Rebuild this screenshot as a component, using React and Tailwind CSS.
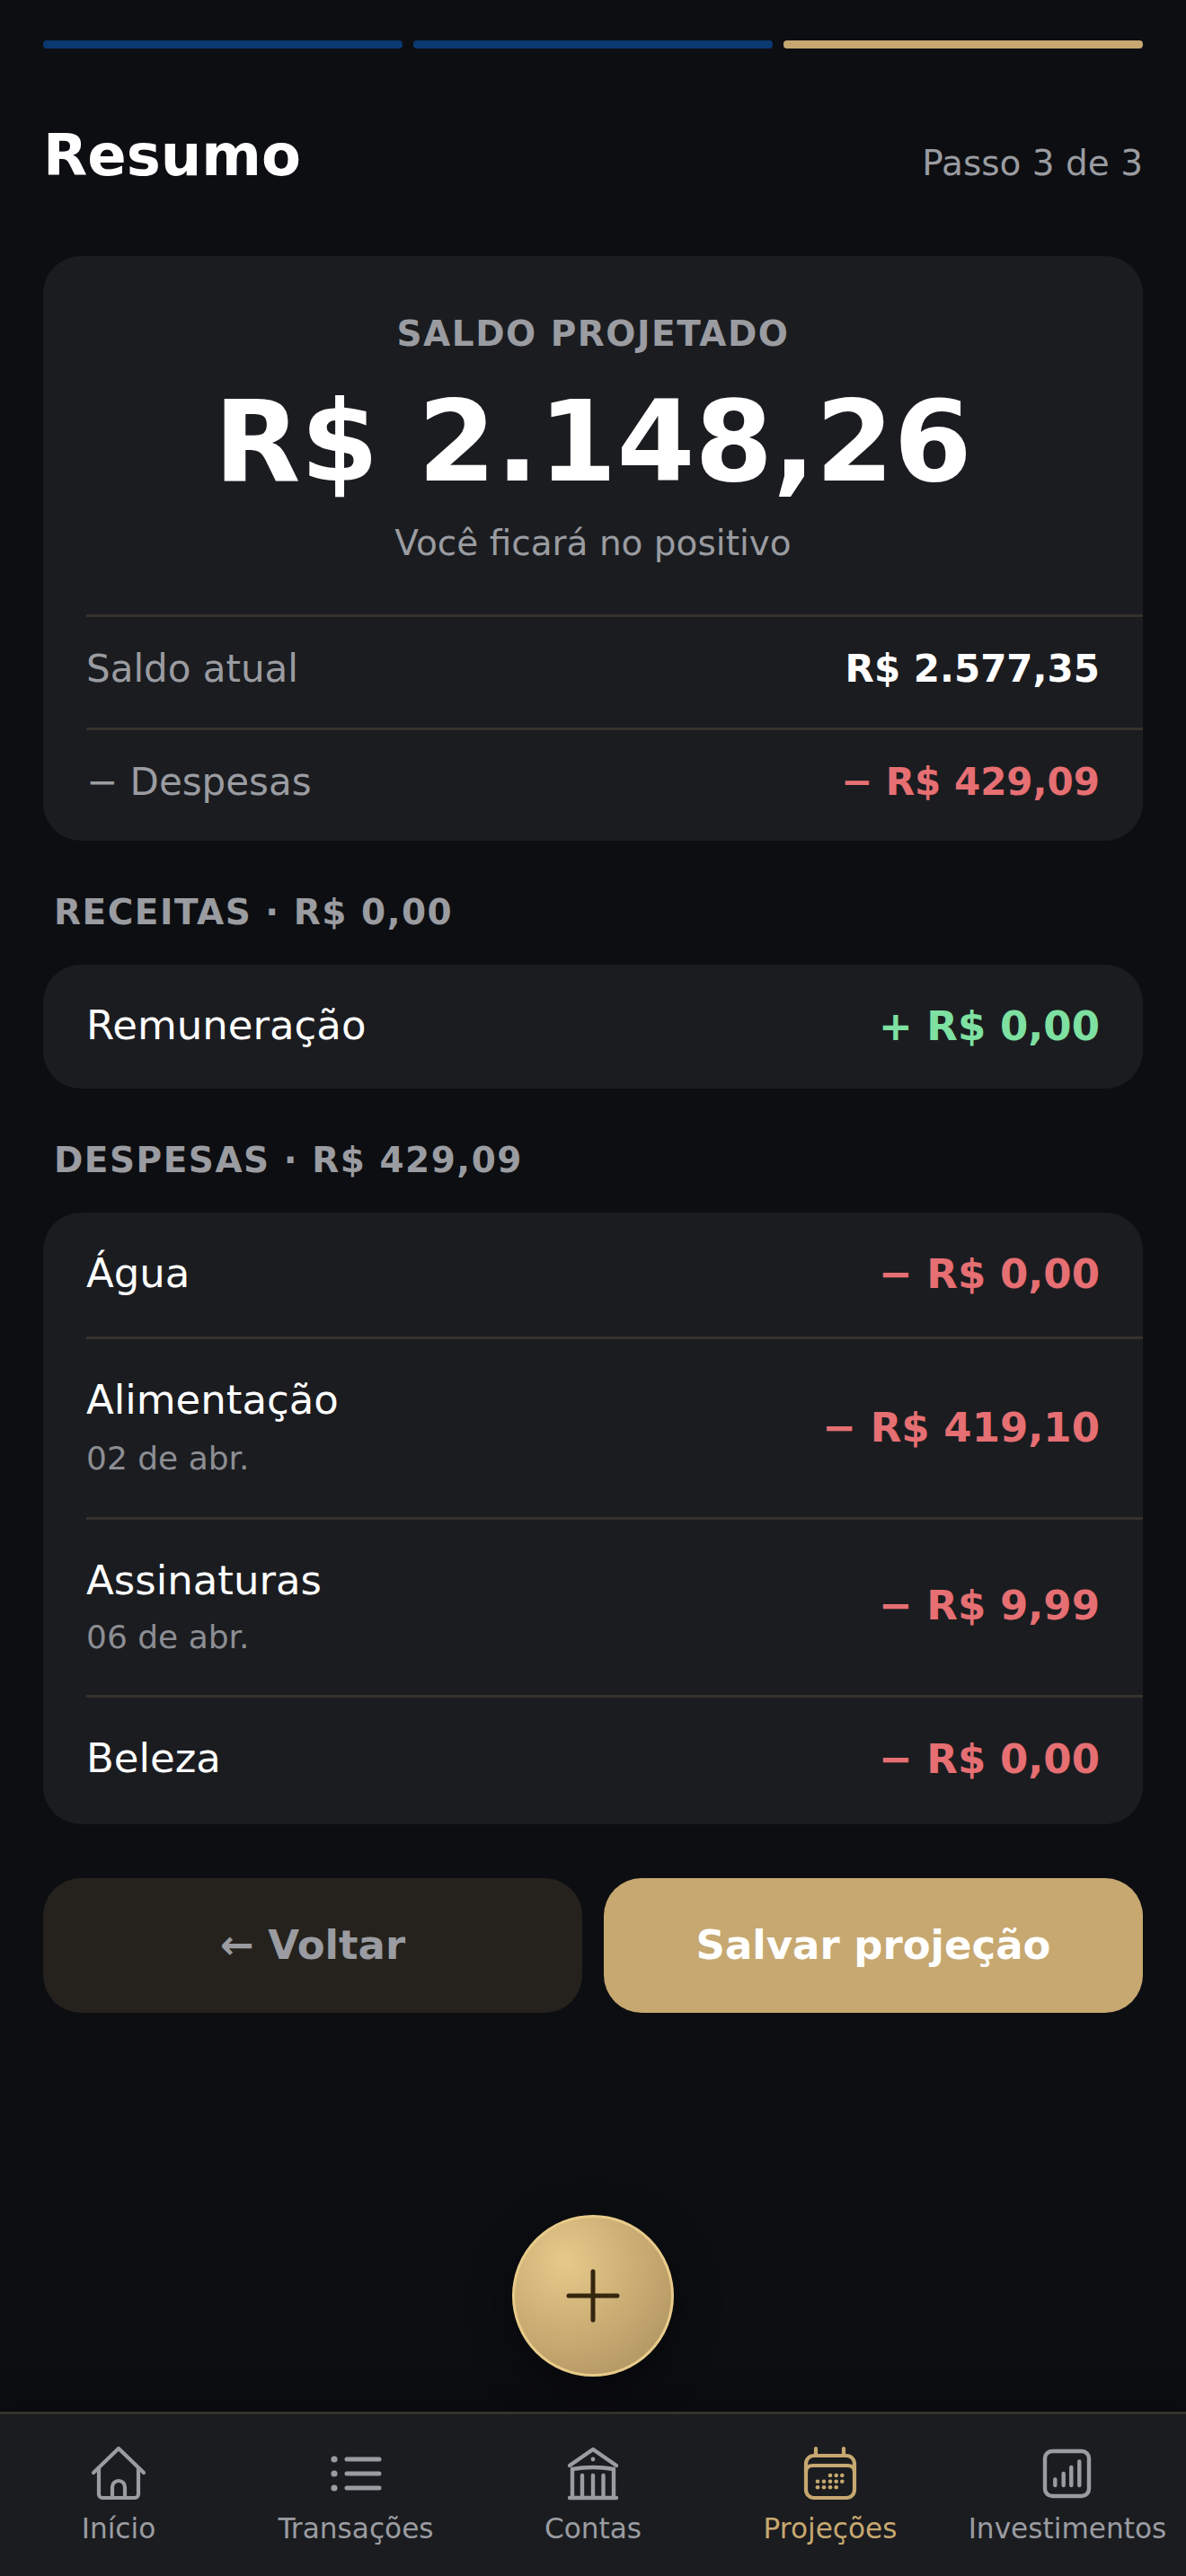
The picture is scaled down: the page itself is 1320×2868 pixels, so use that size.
const font = "font-['DejaVu_Sans',sans-serif]";

function Row({ label, sub, subClass = '', padBottom = 'pb-[43px]', value, valueClass = '', color, divider }) {
  return (
    <div className="flex items-stretch pl-12">
      <div className={`flex flex-1 items-center justify-between pr-12 ${divider ? 'border-t-[3px] border-[#34322b]' : ''}`}>
        <div className={`pt-[41px] ${padBottom}`}>
          <div className="text-[45px] leading-[54px] text-white">{label}</div>
          {sub && <div className={`text-[36px] leading-[48px] text-[#8c8e93] ${subClass}`}>{sub}</div>}
        </div>
        <div className={`text-[45px] font-bold ${color} ${valueClass}`}>{value}</div>
      </div>
    </div>
  );
}

function HomeIcon() {
  return (
    <svg width="72" height="72" viewBox="0 0 72 72" fill="none" stroke="currentColor" strokeWidth="4.2" strokeLinecap="round" strokeLinejoin="round">
      <path d="M8 35 36 8 64 35" />
      <path d="M14 30V59a4 4 0 0 0 4 4H54a4 4 0 0 0 4-4V30" />
      <path d="M29 63V51a6 6 0 0 1 14 0V63" />
    </svg>
  );
}

function ListIcon() {
  return (
    <svg width="72" height="72" viewBox="0 0 72 72" fill="none" stroke="currentColor" strokeWidth="5" strokeLinecap="round">
      <path d="M26 20H62M26 36H62M26 52H62" />
      <circle cx="12" cy="20" r="3.6" fill="currentColor" stroke="none" />
      <circle cx="12" cy="36" r="3.6" fill="currentColor" stroke="none" />
      <circle cx="12" cy="52" r="3.6" fill="currentColor" stroke="none" />
    </svg>
  );
}

function BankIcon() {
  return (
    <svg width="72" height="72" viewBox="0 0 72 72" fill="none" stroke="currentColor" strokeWidth="4.4" strokeLinecap="round" strokeLinejoin="round">
      <path d="M10 27 36 9 62 27" />
      <path d="M13 31Q36 27 59 31" />
      <path d="M13 31V62M59 31V62M24 38V62M36 38V62M47.5 38V62" />
      <path d="M10 63H62" />
      <circle cx="36" cy="20" r="2.4" fill="currentColor" stroke="none" />
    </svg>
  );
}

function CalendarIcon() {
  const dots = [
    [36, 38], [42.7, 38], [49.3, 38],
    [22, 44.7], [29, 44.7], [36, 44.7], [42.7, 44.7], [49.3, 44.7],
    [22, 51.3], [29, 51.3], [36, 51.3], [42.7, 51.3],
  ];
  return (
    <svg width="72" height="72" viewBox="0 0 72 72" fill="none" stroke="currentColor" strokeWidth="4.2" strokeLinecap="round" strokeLinejoin="round">
      <path d="M20 8V16M51 8V16" />
      <rect x="9" y="16" width="54" height="47" rx="9" />
      <path d="M9 34Q9 27 17 27H55Q63 27 63 34" />
      {dots.map(([cx, cy]) => (
        <circle key={`${cx}-${cy}`} cx={cx} cy={cy} r="2.3" fill="currentColor" stroke="none" />
      ))}
    </svg>
  );
}

function ChartIcon() {
  return (
    <svg width="72" height="72" viewBox="0 0 72 72" fill="none" stroke="currentColor" strokeLinecap="round">
      <rect x="11" y="11" width="49" height="50" rx="8" strokeWidth="4.4" />
      <path d="M22.3 42.5V49M31.7 36V49M40.3 29V49M49.3 22.5V49" strokeWidth="4.4" />
    </svg>
  );
}

const navItems = [
  { label: 'Início', icon: HomeIcon },
  { label: 'Transações', icon: ListIcon },
  { label: 'Contas', icon: BankIcon },
  { label: 'Projeções', icon: CalendarIcon, active: true },
  { label: 'Investimentos', icon: ChartIcon },
];

export default function App() {
  return (
    <div className={`relative flex h-[2868px] w-[1320px] flex-col overflow-hidden bg-[#0d0e12] ${font}`}>
      <main className="flex-1 px-12 pt-[45px]">
        <div className="flex gap-3">
          <div className="h-[9px] flex-1 rounded bg-[#0a3871]" />
          <div className="h-[9px] flex-1 rounded bg-[#0a3871]" />
          <div className="h-[9px] flex-1 rounded bg-[#c6a870]" />
        </div>

        <div className="mt-[80px] flex items-baseline justify-between">
          <h1 className="text-[64px] font-bold leading-[78px] text-white">Resumo</h1>
          <span className="text-[39px] leading-[48px] text-[#9a9ca1]">Passo 3 de 3</span>
        </div>

        <section className="mt-[73px] overflow-hidden rounded-[42px] bg-[#1b1c20]">
          <div className="h-[399px] px-12 pt-[63px] text-center">
            <div className="text-[39px] font-bold leading-[48px] tracking-[1.5px] text-[#9a9ca1]">SALDO PROJETADO</div>
            <div className="mt-[21px] text-[125px] font-bold leading-[150px] text-white">R$ 2.148,26</div>
            <div className="mt-[14px] text-[39px] leading-[48px] text-[#9a9ca1]">Você ficará no positivo</div>
          </div>
          <div className="pl-12">
            <div className="flex h-[126px] items-center justify-between border-t-[3px] border-[#34322b] pr-12 pb-2">
              <span className="text-[42px] text-[#9a9ca1]">Saldo atual</span>
              <span className="text-[42px] font-bold text-white">R$ 2.577,35</span>
            </div>
            <div className="flex h-[126px] items-center justify-between border-t-[3px] border-[#34322b] pr-12 pb-2">
              <span className="text-[42px] text-[#9a9ca1]">− Despesas</span>
              <span className="text-[42px] font-bold text-[#e56f72]">− R$ 429,09</span>
            </div>
          </div>
        </section>

        <h2 className="mt-[56px] pl-3 text-[39px] font-bold leading-[48px] tracking-[1.5px] text-[#9a9ca1]">RECEITAS · R$ 0,00</h2>
        <section className="mt-[34px] overflow-hidden rounded-[42px] bg-[#1b1c20]">
          <Row label="Remuneração" value="+ R$ 0,00" color="text-[#7ee0a1]" />
        </section>

        <h2 className="mt-[56px] pl-3 text-[39px] font-bold leading-[48px] tracking-[1.5px] text-[#9a9ca1]">DESPESAS · R$ 429,09</h2>
        <section className="mt-[34px] overflow-hidden rounded-[42px] bg-[#1b1c20]">
          <Row label="Água" value="− R$ 0,00" color="text-[#e56f72]" />
          <Row label="Alimentação" sub="02 de abr." subClass="mt-[14px]" padBottom="pb-[41px]" value="− R$ 419,10" color="text-[#e56f72]" divider />
          <Row label="Assinaturas" sub="06 de abr." subClass="mt-[12px]" padBottom="pb-[40px]" value="− R$ 9,99" valueClass="mb-[3px]" color="text-[#e56f72]" divider />
          <Row label="Beleza" padBottom="pb-[46px]" value="− R$ 0,00" valueClass="mb-[3px]" color="text-[#e56f72]" divider />
        </section>

        <div className="mt-[60px] flex gap-6">
          <button type="button" className="h-[150px] flex-1 rounded-[42px] bg-[#25221d] text-[45px] font-bold text-[#9a9ca1]">← Voltar</button>
          <button type="button" className="h-[150px] flex-1 rounded-[42px] bg-[#c6a870] text-[45px] font-bold text-white">Salvar projeção</button>
        </div>
      </main>

      <button
        type="button"
        aria-label="Adicionar"
        className="absolute left-[570px] top-[2466px] z-10 flex h-[180px] w-[180px] items-center justify-center rounded-full border-[3px] border-[#e8cb8a] bg-[radial-gradient(circle_at_32%_28%,#e6c98a,#c6a870_55%,#a78d5c)] text-[#35260f] shadow-[0_12px_48px_rgba(0,0,0,0.5)]"
      >
        <svg width="60" height="60" viewBox="0 0 60 60" fill="none" stroke="currentColor" strokeWidth="5" strokeLinecap="round">
          <path d="M30 3V57M3 30H57" />
        </svg>
      </button>

      <nav className="grid h-[183px] grid-cols-5 border-t-[3px] border-[#34322b] bg-[#1b1c20] pt-[30px] shadow-[0_-12px_36px_rgba(0,0,0,0.3)]">
        {navItems.map((item) => {
          const Icon = item.icon;
          return (
            <div key={item.label} className={`flex flex-col items-center ${item.active ? 'text-[#c6a870]' : 'text-[#9a9ca1]'}`}>
              <Icon />
              <span className="mt-[4px] whitespace-nowrap text-[31.2px] leading-[42px]">{item.label}</span>
            </div>
          );
        })}
      </nav>
    </div>
  );
}
